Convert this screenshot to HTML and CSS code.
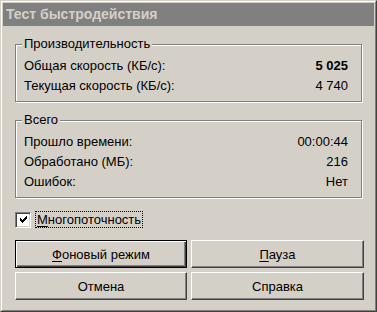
FILE: index.html
```html
<!DOCTYPE html>
<html lang="ru">
<head>
<meta charset="utf-8">
<title>Тест быстродействия</title>
<link rel="stylesheet" href="styles.css">
</head>
<body>
<div class="frame">
  <div class="frame-inner">
    <div class="titlebar">Тест быстродействия</div>
    <div class="content">
      <div class="group">
        <span class="legend">Производительность</span>
        <div class="row"><span>Общая скорость (КБ/с):</span><span class="bold">5 025</span></div>
        <div class="row"><span>Текущая скорость (КБ/с):</span><span>4 740</span></div>
      </div>
      <div class="group group-total">
        <span class="legend">Всего</span>
        <div class="row"><span>Прошло времени:</span><span>00:00:44</span></div>
        <div class="row"><span>Обработано (МБ):</span><span>216</span></div>
        <div class="row"><span>Ошибок:</span><span>Нет</span></div>
      </div>
      <label class="checkrow">
        <span class="check">
          <svg width="7" height="7" viewBox="0 0 7 7" shape-rendering="crispEdges">
            <rect x="6" y="0" width="1" height="1"/>
            <rect x="5" y="1" width="2" height="1"/>
            <rect x="0" y="2" width="1" height="1"/>
            <rect x="4" y="2" width="3" height="1"/>
            <rect x="0" y="3" width="2" height="1"/>
            <rect x="3" y="3" width="3" height="1"/>
            <rect x="0" y="4" width="5" height="1"/>
            <rect x="1" y="5" width="3" height="1"/>
            <rect x="2" y="6" width="1" height="1"/>
          </svg>
        </span>
        <span class="focus"><u>М</u>ногопоточность</span>
      </label>
      <div class="buttons">
        <button class="btn default"><u>Ф</u>оновый режим</button>
        <button class="btn"><u>П</u>ауза</button>
        <button class="btn">Отмена</button>
        <button class="btn">Справка</button>
      </div>
    </div>
  </div>
</div>
</body>
</html>
```
FILE: styles.css
```css
html, body {
  margin: 0;
  padding: 0;
}
body {
  width: 377px;
  height: 312px;
  background: #d4d0c8;
  font-family: "Liberation Sans", Arial, sans-serif;
  font-size: 13px;
  color: #000;
  overflow: hidden;
}
.frame {
  box-sizing: border-box;
  width: 377px;
  height: 312px;
  border: 1px solid;
  border-color: #d4d0c8 #404040 #404040 #d4d0c8;
}
.frame-inner {
  box-sizing: border-box;
  height: 100%;
  border: 1px solid;
  border-color: #fff #808080 #808080 #fff;
  padding: 1px;
}
.titlebar {
  height: 23px;
  line-height: 23px;
  background: #808080;
  color: #d4d0c8;
  font-weight: bold;
  font-size: 14px;
  padding-left: 3px;
}
.content {
  padding: 0 10px 0 12px;
}
.group {
  position: relative;
  margin: 18px 2px 0 0;
  border: 1px solid #808080;
  box-shadow: 1px 1px 0 #fff, inset 1px 1px 0 #fff;
  padding: 11px 13px 5px 8px;
}
.group-total {
  margin-top: 18px;
}
.legend {
  position: absolute;
  left: 6px;
  top: -9px;
  line-height: 16px;
  padding: 0 2px;
  background: #d4d0c8;
}
.row {
  display: flex;
  justify-content: space-between;
  height: 20px;
  line-height: 20px;
}
.bold {
  font-weight: bold;
}
.checkrow {
  display: flex;
  align-items: center;
  gap: 4px;
  margin-top: 13px;
  height: 17px;
}
.check {
  box-sizing: border-box;
  width: 16px;
  height: 16px;
  background: #fff;
  border: 1px solid;
  border-color: #808080 #fff #fff #808080;
  box-shadow: inset 1px 1px 0 #404040, inset -1px -1px 0 #d4d0c8;
  display: flex;
  align-items: center;
  justify-content: center;
}
.check svg {
  display: block;
  fill: #000;
}
.focus {
  border: 1px dotted #000;
  line-height: 15px;
  padding: 0 1px;
}
.buttons {
  display: grid;
  grid-template-columns: 172px 173px;
  column-gap: 4px;
  row-gap: 4px;
  margin-top: 12px;
}
.btn {
  box-sizing: border-box;
  height: 28px;
  margin: 0;
  padding: 0;
  font: inherit;
  color: #000;
  background: #d4d0c8;
  border: 1px solid;
  border-color: #fff #404040 #404040 #fff;
  box-shadow: inset -1px -1px 0 #808080, inset 1px 1px 0 #d4d0c8;
  border-radius: 0;
  text-align: center;
}
.btn.default {
  border-color: #000;
  box-shadow: inset 1px 1px 0 #fff, inset -1px -1px 0 #404040, inset -2px -2px 0 #808080;
}
u {
  text-decoration: underline;
  text-underline-offset: 2px;
}
```
